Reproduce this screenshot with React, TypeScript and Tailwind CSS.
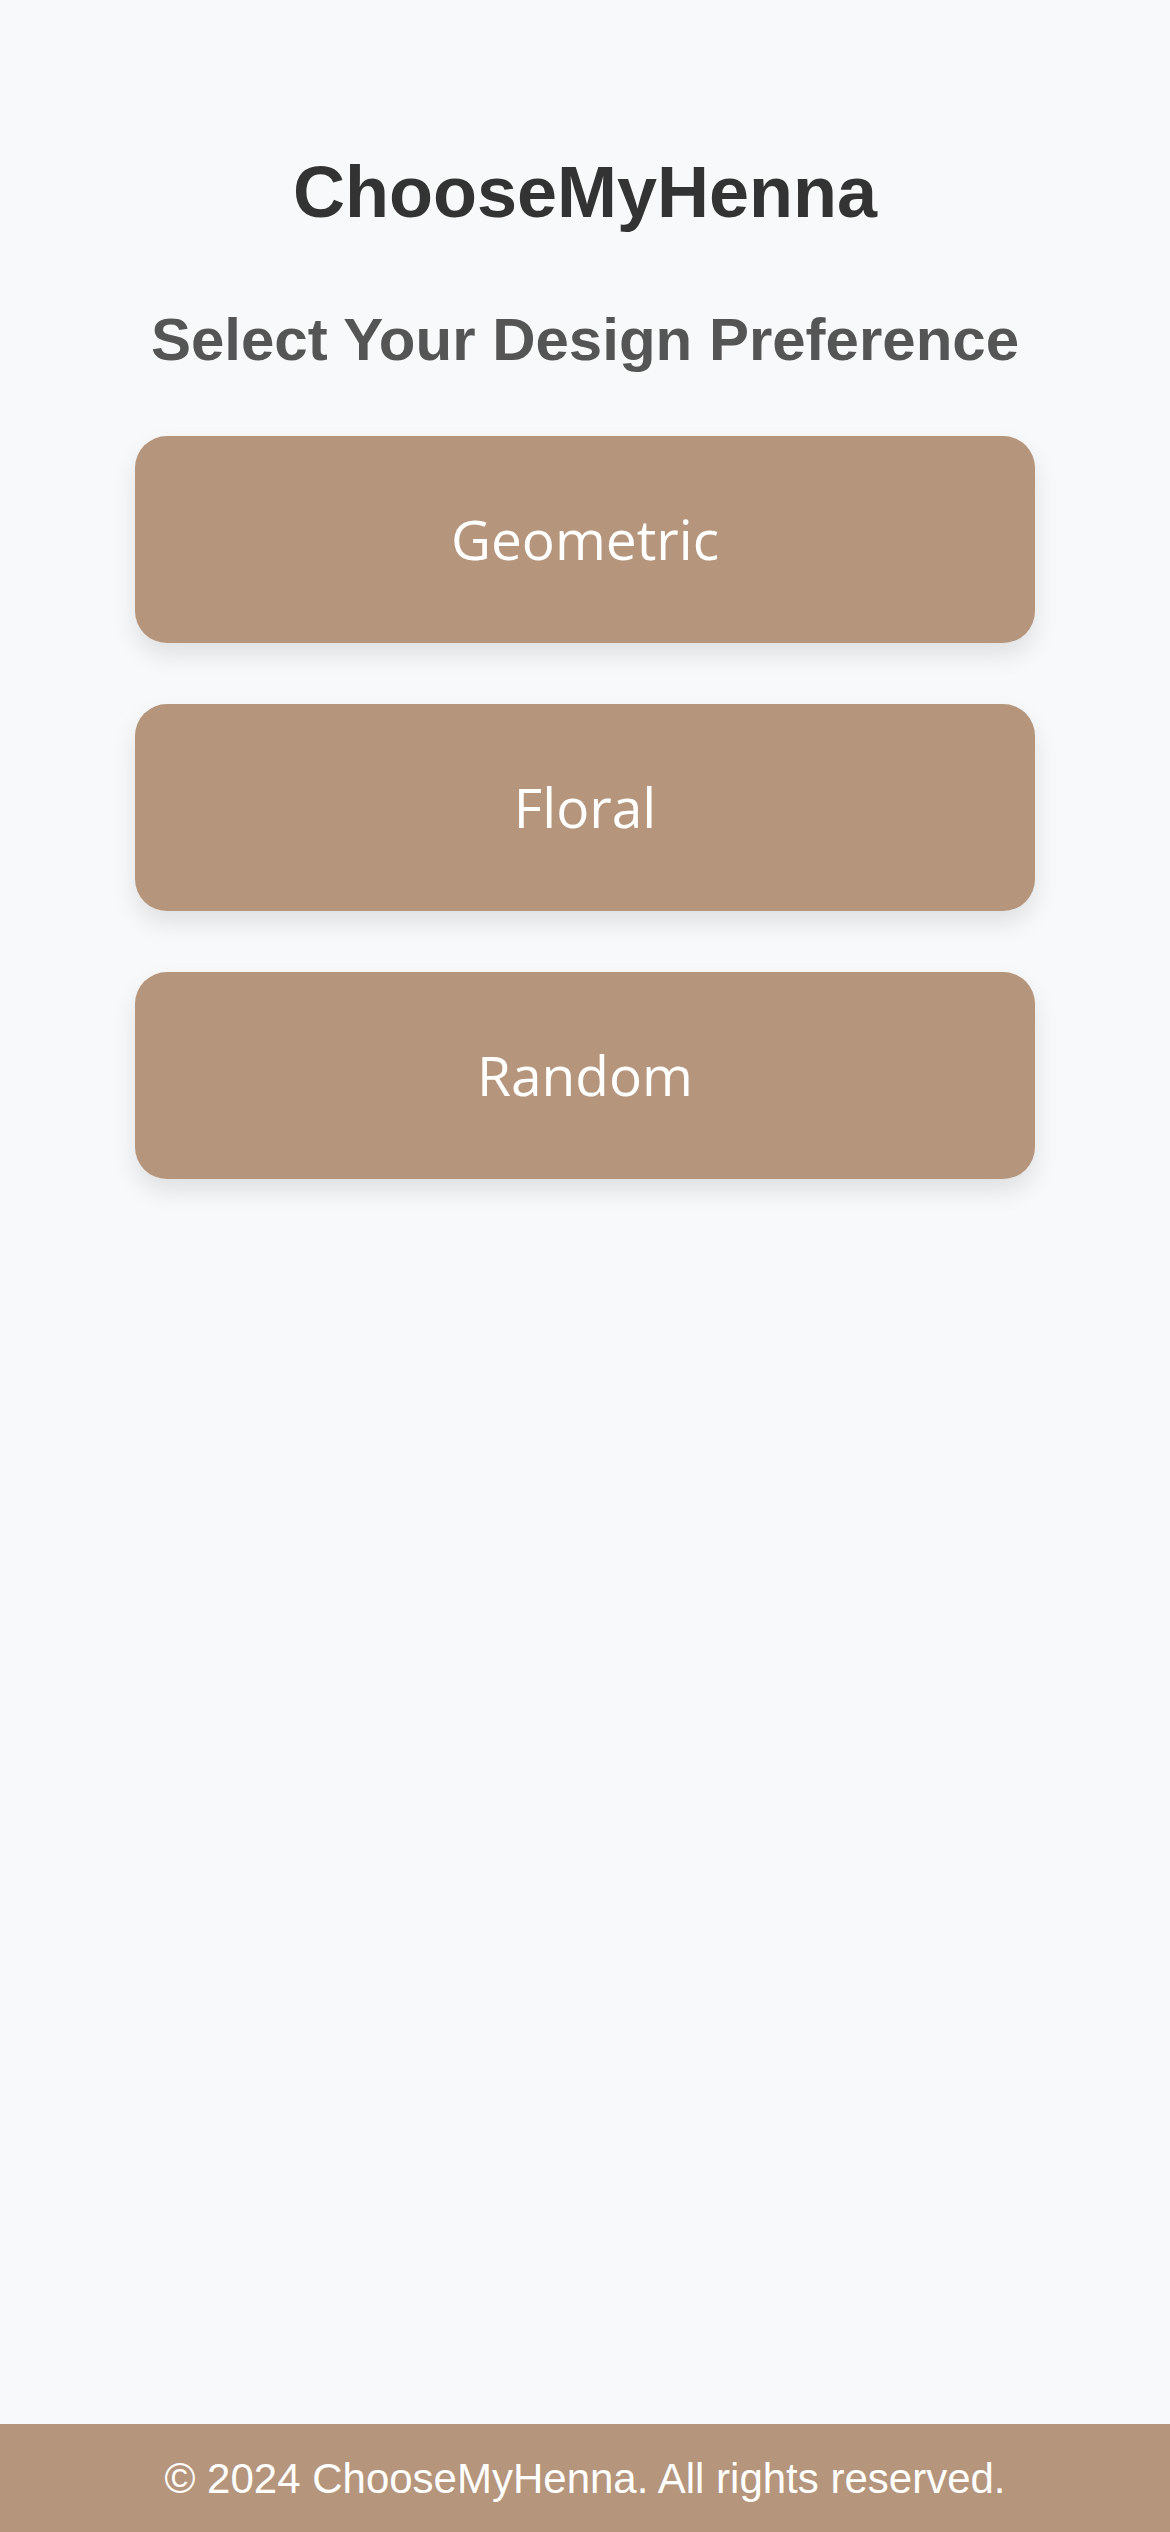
import React from 'react';

const options = ['Geometric', 'Floral', 'Random'];

const App: React.FC = () => {
  return (
    <div className="min-h-screen flex flex-col bg-[#f8f9fa] font-['Liberation_Sans',Arial,sans-serif]">
      <main className="flex-1 flex flex-col items-center pt-[156px]">
        <h1 className="text-[72px] leading-none font-bold text-[#333333]">ChooseMyHenna</h1>
        <h2 className="mt-[82px] text-[60px] leading-none font-bold text-[#555555]">
          Select Your Design Preference
        </h2>
        <div className="mt-[66px] w-[900px] flex flex-col gap-[61px]">
          {options.map((label) => (
            <button
              key={label}
              className="h-[207px] w-full rounded-[32px] bg-[#b5957b] text-white text-[55px] font-['Open_Sans','Noto_Sans',sans-serif] shadow-[0_12px_24px_rgba(0,0,0,0.1)]"
            >
              {label}
            </button>
          ))}
        </div>
      </main>
      <footer className="h-[108px] bg-[#b5957b] flex items-center justify-center">
        <p className="text-[42px] text-white">© 2024 ChooseMyHenna. All rights reserved.</p>
      </footer>
    </div>
  );
};

export default App;
